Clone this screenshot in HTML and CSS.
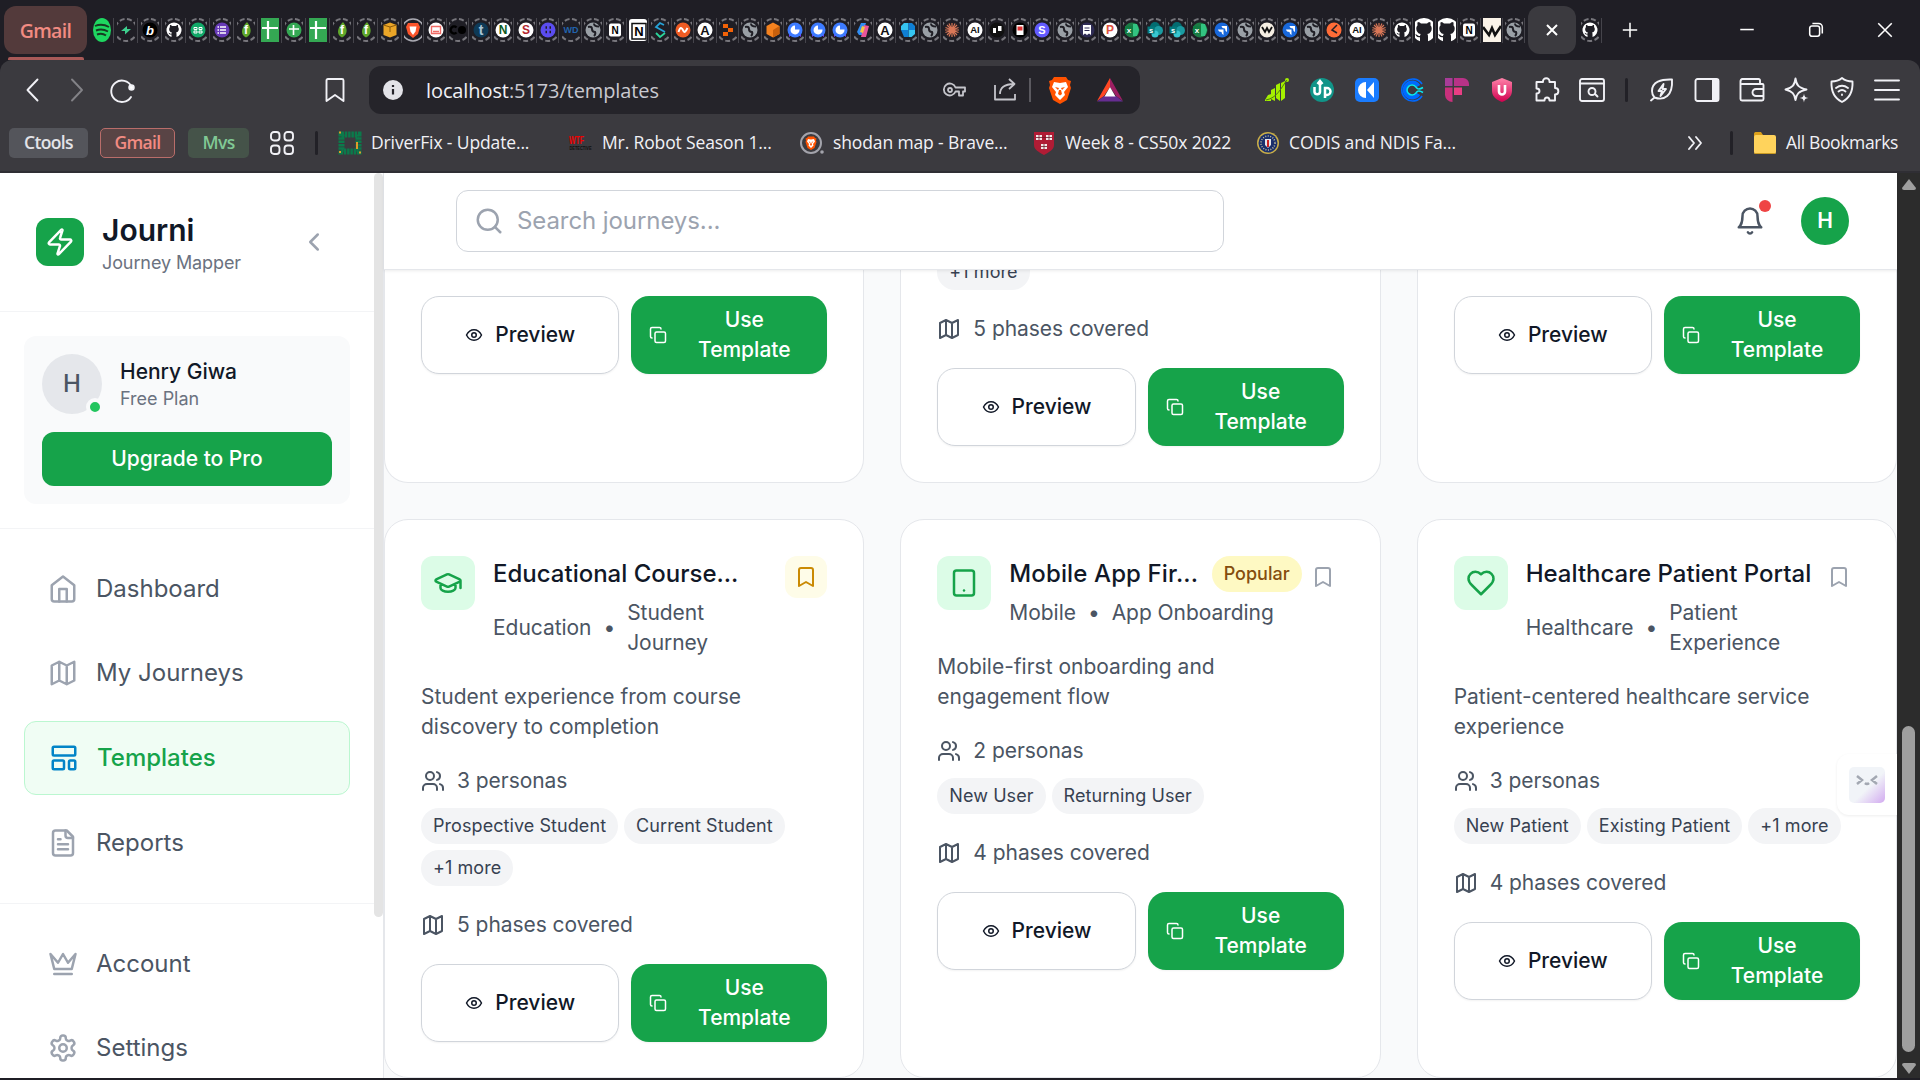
FILE: index.html
```html
<!DOCTYPE html>
<html lang="en">
<head>
<meta charset="utf-8">
<title>Journi - Templates</title>
<link rel="stylesheet" href="styles.css">
</head>
<body>
<svg class="defs" aria-hidden="true">
  <symbol id="zap" viewBox="0 0 24 24"><path d="M4 14a1 1 0 0 1-.78-1.63l9.9-10.2a.5.5 0 0 1 .86.46l-1.92 6.02A1 1 0 0 0 13 10h7a1 1 0 0 1 .78 1.63l-9.9 10.2a.5.5 0 0 1-.86-.46l1.92-6.02A1 1 0 0 0 11 14z"/></symbol>
  <symbol id="chev" viewBox="0 0 24 24"><path d="m15 18-6-6 6-6"/></symbol>
  <symbol id="home" viewBox="0 0 24 24"><path d="m3 9 9-7 9 7v11a2 2 0 0 1-2 2H5a2 2 0 0 1-2-2z"/><path d="M9 22V12h6v10"/></symbol>
  <symbol id="map" viewBox="0 0 24 24"><path d="M3 6 9 3l6 3 6-3v15l-6 3-6-3-6 3zM9 3v15M15 6v15"/></symbol>
  <symbol id="layout" viewBox="0 0 24 24"><rect width="18" height="7" x="3" y="3" rx="1"/><rect width="9" height="7" x="3" y="14" rx="1"/><rect width="5" height="7" x="16" y="14" rx="1"/></symbol>
  <symbol id="file" viewBox="0 0 24 24"><path d="M15 2H6a2 2 0 0 0-2 2v16a2 2 0 0 0 2 2h12a2 2 0 0 0 2-2V7z"/><path d="M14 2v4a2 2 0 0 0 2 2h4M10 9H8M16 13H8M16 17H8"/></symbol>
  <symbol id="crown" viewBox="0 0 24 24"><path d="m2 4 3 12h14l3-12-6 7-4-7-4 7zM5 20h14"/></symbol>
  <symbol id="gear" viewBox="0 0 24 24"><path d="M12.22 2h-.44a2 2 0 0 0-2 2v.18a2 2 0 0 1-1 1.73l-.43.25a2 2 0 0 1-2 0l-.15-.08a2 2 0 0 0-2.73.73l-.22.38a2 2 0 0 0 .73 2.73l.15.1a2 2 0 0 1 1 1.72v.51a2 2 0 0 1-1 1.74l-.15.09a2 2 0 0 0-.73 2.73l.22.38a2 2 0 0 0 2.73.73l.15-.08a2 2 0 0 1 2 0l.43.25a2 2 0 0 1 1 1.73V20a2 2 0 0 0 2 2h.44a2 2 0 0 0 2-2v-.18a2 2 0 0 1 1-1.73l.43-.25a2 2 0 0 1 2 0l.15.08a2 2 0 0 0 2.73-.73l.22-.39a2 2 0 0 0-.73-2.73l-.15-.08a2 2 0 0 1-1-1.74v-.5a2 2 0 0 1 1-1.74l.15-.09a2 2 0 0 0 .73-2.73l-.22-.38a2 2 0 0 0-2.73-.73l-.15.08a2 2 0 0 1-2 0l-.43-.25a2 2 0 0 1-1-1.73V4a2 2 0 0 0-2-2z"/><circle cx="12" cy="12" r="3"/></symbol>
  <symbol id="search" viewBox="0 0 24 24"><circle cx="11" cy="11" r="8"/><path d="m21 21-4.3-4.3"/></symbol>
  <symbol id="bell" viewBox="0 0 24 24"><path d="M6 8a6 6 0 0 1 12 0c0 7 3 9 3 9H3s3-2 3-9M10.3 21a1.94 1.94 0 0 0 3.4 0"/></symbol>
  <symbol id="eye" viewBox="0 0 24 24"><path d="M2 12s3.5-7 10-7 10 7 10 7-3.500 7-10 7S2 12 2 12z"/><circle cx="12" cy="12" r="3"/></symbol>
  <symbol id="copy" viewBox="0 0 24 24"><rect width="14" height="14" x="8" y="8" rx="2"/><path d="M4 16c-1.100 0-2-.9-2-2V4c0-1.100.9-2 2-2h10c1.100 0 2 .9 2 2"/></symbol>
  <symbol id="users" viewBox="0 0 24 24"><path d="M16 21v-2a4 4 0 0 0-4-4H6a4 4 0 0 0-4 4v2M22 21v-2a4 4 0 0 0-3-3.87M16 3.130a4 4 0 0 1 0 7.750"/><circle cx="9" cy="7" r="4"/></symbol>
  <symbol id="mark" viewBox="0 0 24 24"><path d="m19 21-7-4-7 4V5a2 2 0 0 1 2-2h10a2 2 0 0 1 2 2z"/></symbol>
  <symbol id="grad" viewBox="0 0 24 24"><path d="M21.420 10.920a1 1 0 0 0-.02-1.840L12.830 5.180a2 2 0 0 0-1.660 0L2.600 9.080a1 1 0 0 0 0 1.830l8.570 3.910a2 2 0 0 0 1.660 0zM22 10v6M6 12.500V16a6 3 0 0 0 12 0v-3.500"/></symbol>
  <symbol id="tablet" viewBox="0 0 24 24"><rect width="16" height="20" x="4" y="2" rx="2"/><path d="M12 18h.01"/></symbol>
  <symbol id="heart" viewBox="0 0 24 24"><path d="M19 14c1.490-1.460 3-3.210 3-5.500A5.500 5.500 0 0 0 16.500 3c-1.760 0-3 .5-4.500 2-1.500-1.500-2.740-2-4.500-2A5.500 5.500 0 0 0 2 8.500c0 2.300 1.500 4.050 3 5.500l7 7z"/></symbol>
  <symbol id="lion" viewBox="0 0 24 28"><path fill="#ff5200" d="M6 1h12l2 3 3 1-1 4 1 3-4 12-7 4-7-4L1 12l1-3-1-4 3-1z"/><path fill="#fff" d="m6 6 6 1 6-1 2 5-4 5 1 3-5 5-5-5 1-3-4-5z"/><path fill="#ff5200" d="m7 11 4 1-1 2zM17 11l-4 1 1 2zM11 14h2l1 4-2 1.500L10 18z"/></symbol>
</svg>

<header class="browser">
  <div class="tabs">
    <div class="group-tab">Gmail</div>
    <div class="favs" id="favs"></div>
    <svg class="plus" viewBox="0 0 20 20"><path d="M10 2v16M2 10h16"/></svg>
    <div class="win">
      <svg viewBox="0 0 20 20"><path d="M2.500 9.500h15"/></svg>
      <svg viewBox="0 0 20 20"><rect x="3" y="5.500" width="11" height="11.500" rx="2.500"/><path d="M6 2.800h7a4 4 0 0 1 4 4V14"/></svg>
      <svg viewBox="0 0 20 20"><path d="m2.500 2.500 15 15m0-15-15 15"/></svg>
    </div>
  </div>
  <div class="toolbar">
    <div class="nav-left">
      <svg class="w" viewBox="0 0 24 24"><path d="m17.500 1.500-10 10.500 10 10.500"/></svg>
      <svg class="w dim" viewBox="0 0 24 24"><path d="m7 1.500 10 10.500-10 10.500"/></svg>
      <svg class="w" viewBox="0 0 24 24"><path d="M21 19A10.700 10.700 0 1 1 21.500 8.500"/><circle cx="21.500" cy="9.500" r="2.300" fill="#fff"/></svg>
    </div>
    <svg class="w book" viewBox="0 0 24 24"><path d="M3.500 2.500c0-1 .5-1.500 1.500-1.500h14c1 0 1.500.5 1.500 1.500V23l-8.500-6-8.500 6z"/></svg>
    <div class="address">
      <svg class="info" viewBox="0 0 20 20"><circle cx="10" cy="10" r="10" fill="#e3e3e8"/><path d="M10 9v5.500M10 5v2" stroke="#25242a" stroke-width="2.200"/></svg>
      <span class="url">localhost<em>:5173/templates</em></span>
      <svg class="key" viewBox="0 0 24 24"><path d="M13.500 9.500H23v4h-2v4h-4v-4h-3.500a6 6 0 1 1 0-4z"/><circle cx="8" cy="12" r="2"/></svg>
      <svg class="share" viewBox="0 0 24 24"><path d="M2 7v14.500h20V16M7 16c0-6 4-10 14-10M16 1l5.500 5-5.500 5"/></svg>
      <i class="bar"></i>
      <svg class="brave" viewBox="0 0 24 28"><use href="#lion"/></svg>
      <svg class="bat" viewBox="0 0 26 24"><path fill="#ff4724" d="M13 0v9l-6 9-7 5z"/><path fill="#9e1f63" d="M13 0v9l6 9 7 5z"/><path fill="#662d91" d="M0 23.500 7 18h12l7 5.500z"/><path fill="#fff" d="m13 9 5.500 9.500h-11z"/></svg>
    </div>
    <div class="ext">
      <svg viewBox="0 0 24 24"><path fill="#a4f000" d="M0 22l3-5 3-1v7H0zM6 12l4-2v13l-4-2zM11 7l4-2v18l-4-3zM16 5l4-2v17l-4 3z"/><circle cx="22" cy="2" r="2" fill="#a4f000"/><path d="M1 22C12 20 16 10 22 2" fill="none" stroke="#4d7c0f" stroke-width="1"/></svg>
      <svg viewBox="0 0 24 24"><circle cx="12" cy="12" r="12" fill="#119488"/><path d="M4.500 9v5a2.800 2.800 0 0 0 5.500 0V4M7.500 6 10 3l2.500 3M15 20V10h2a3.500 3.500 0 0 1 0 7h-2" fill="none" stroke="#fff" stroke-width="2.500"/></svg>
      <svg viewBox="0 0 24 24"><rect width="24" height="24" rx="5" fill="#1a7cff"/><path fill="#fff" d="M11 4v16a8 8 0 0 1 0-16zM19 4v16l-7-8z"/></svg>
      <svg viewBox="0 0 24 24" fill="none" stroke-width="1.600"><path stroke="#0069ff" d="M22 18a11 11 0 1 1 0-12"/><path stroke="#0069ff" stroke-width="4" d="M18.500 16a7.500 7.500 0 1 1 0-8"/><path stroke="#0ae8f0" d="M23 9.500c-5 3-6 1-7-.5a5 5 0 1 0 0 6c1-1.500 2-3.500 7-.5"/></svg>
      <svg viewBox="0 0 24 24"><path fill="#a83c98" d="M0 0h7.500v8H0z"/><path fill="#b83287" d="M9 0h9a6 6 0 0 1 6 6v2H9z"/><path fill="#c9307c" d="M0 9.500h7.500V24A7.500 7.500 0 0 1 0 17z"/><path fill="#e83e84" d="M9 9.500h8V17H9z"/></svg>
      <svg viewBox="0 0 24 24"><defs><linearGradient id="ug" x2="0" y2="1"><stop stop-color="#ff83aa"/><stop offset="1" stop-color="#d1004f"/></linearGradient></defs><path fill="url(#ug)" d="m12 0 10 4v9c0 6-5 9-10 11C7 22 2 19 2 13V4z"/><path d="M9 7v6.500a3 3 0 0 0 6 0V7" fill="none" stroke="#fff" stroke-width="2.600"/></svg>
      <svg class="w" viewBox="0 0 24 24"><path d="M1.500 4h6.500c-.5-5 7-5 6.500 0h5.500v6c4.500 0 4.500 6.500 0 6.500V22.500h-5.500c0-4-5-4-5 0H1.500v-7c4 0 4-5 0-5z"/></svg>
      <svg class="w" viewBox="0 0 24 24"><rect x="0" y="1" width="24" height="22" rx="2"/><path d="M0 5.500h24"/><circle cx="12" cy="13.500" r="3.500"/><path d="m15 16 2.500 2.500"/></svg>
      <i class="sep"></i>
      <svg class="w" viewBox="0 0 24 24"><path d="M22 1.500C11 1 2 4 2 13c0 3 1 5 2.500 6.500C14 23 23 18 22 1.500zM1 22.500l3.500-3"/><path d="m13.500 6-5 7h3.500l-1.500 5 5.500-7h-3.500z"/></svg>
      <svg class="w" viewBox="0 0 24 24"><rect x=".5" y="1" width="23" height="22" rx="2"/><path fill="#f1f1f6" stroke="none" d="M17 1h7v22h-7z"/></svg>
      <svg class="w" viewBox="0 0 24 24"><path d="M20 6V2.500c0-1-.5-1.500-1.500-1.500H2.500C1 1 .5 2 .5 3.500V21c0 1 .5 1.500 1.500 1.500h20c1 0 1.500-.5 1.500-1.500V7c0-.7-.5-1-1-1H2M23 11h-7a3.500 3.500 0 0 0 0 7h7"/></svg>
      <svg class="w" viewBox="0 0 24 24"><path d="M10.500.5c1 7 3 9 11 11-8 2-10 4-11 10.500C9.500 15.500 7.500 13.500.5 11.500c7-2 9-4 10-11z"/><path fill="#f1f1f6" stroke="none" d="M19 15.500c.5 3 1 4 4.500 4.500-3.500.5-4 1.500-4.500 4.500-.5-3-1-4-4.500-4.500 3.500-.5 4-1.500 4.500-4.500z"/></svg>
      <svg class="w" viewBox="0 0 24 24"><path d="M12 0c3 2.500 6 3.500 10.500 3.500C23 13 20 20 12 24 4 20 1 13 1.500 3.500 6 3.500 9 2.500 12 0z"/><path d="M6 10c4-3 8-3 12 0M8.500 13.500c2.500-2 4.500-2 7 0M12 16.500v.5"/></svg>
      <svg class="w" viewBox="0 0 24 24"><path d="M0 2.500h24M0 12h24M0 21.500h24"/></svg>
    </div>
  </div>
  <div class="bookmarks">
    <span class="chip grey">Ctools</span><span class="chip red">Gmail</span><span class="chip green">Mvs</span>
    <svg class="w grid4" viewBox="0 0 24 24"><rect x="1" y="1" width="8.500" height="8.500" rx="3"/><rect x="14.500" y="1" width="8.500" height="8.500" rx="3"/><rect x="1" y="14.500" width="8.500" height="8.500" rx="3"/><rect x="14.500" y="14.500" width="8.500" height="8.500" rx="3"/></svg>
    <i class="sep"></i>
    <div class="links">
      <span><svg viewBox="0 0 24 24"><path d="M3.500 3.500h17v17h-17z" fill="none" stroke="#0b7a4b" stroke-width="6" stroke-dasharray="2.500 .8"/><path d="M1 1.500h2m18 20h2M19 11v7M1 21h2" stroke="#e09a2b" stroke-width="2"/></svg><b>DriverFix - Update...</b></span>
      <span><svg viewBox="0 0 24 24"><text x="0" y="13" class="wtf" textLength="15" lengthAdjust="spacingAndGlyphs">WTF</text><text x=".5" y="19" class="det" textLength="22" lengthAdjust="spacingAndGlyphs">DETECTIVE</text></svg><b>Mr. Robot Season 1...</b></span>
      <span><svg viewBox="0 0 24 24"><circle cx="11" cy="12" r="10" fill="none" stroke="#a3a3ab" stroke-width="2"/><use href="#lion" x="5" y="5" width="12" height="14"/><circle cx="22" cy="21" r="1.800" fill="#a3a3ab"/></svg><b>shodan map - Brave...</b></span>
      <span><svg viewBox="0 0 24 24"><path fill="#b01c35" d="M2 1h20v13c0 5-5 7-10 10C7 21 2 19 2 14z"/><path fill="#f3e9ea" d="M4 4h6v5H4zM14 4h6v5h-6zM9 13h6v5H9z"/><path stroke="#6e1a28" d="M7 4v5M17 4v5M12 13v5M4 6.500h16M9 15.500h6" stroke-width=".8"/></svg><b>Week 8 - CS50x 2022</b></span>
      <span><svg viewBox="0 0 24 24"><circle cx="12" cy="12" r="11" fill="#c9ae48"/><circle cx="12" cy="12" r="9.500" fill="#1b2f6b"/><circle cx="12" cy="12" r="7" fill="none" stroke="#c9c49a" stroke-width="1.500" stroke-dasharray="1 1.500"/><path fill="#e5e5ea" d="M9 8h6v6l-3 3-3-3z"/><path stroke="#c22" d="M12 9v7" stroke-width="2"/></svg><b>CODIS and NDIS Fa...</b></span>
    </div>
    <svg class="w more" viewBox="0 0 16 16"><path d="m2 2 5 6-5 6M9 2l5 6-5 6"/></svg>
    <i class="sep"></i>
    <span class="all"><svg viewBox="0 0 24 24"><path fill="#dca01a" d="M1 3c0-1 .5-2 1.500-2H8l2 3h6v6H1z"/><rect x="1" y="4" width="22" height="19" rx="2" fill="#ffd35c"/><path d="M1.500 22.500h21" stroke="#c99a24"/></svg><b>All Bookmarks</b></span>
  </div>
</header>

<div class="page">
  <aside class="side">
    <div class="brand">
      <div class="logo"><svg class="i"><use href="#zap"/></svg></div>
      <div><h1>Journi</h1><p>Journey Mapper</p></div>
      <svg class="i fold"><use href="#chev"/></svg>
    </div>
    <div class="acct">
      <div class="panel">
        <div class="who">
          <div class="ava">H<i></i></div>
          <div><strong>Henry Giwa</strong><p>Free Plan</p></div>
        </div>
        <button class="up">Upgrade to Pro</button>
      </div>
    </div>
    <nav>
      <a><svg class="i"><use href="#home"/></svg><span>Dashboard</span></a>
      <a><svg class="i"><use href="#map"/></svg><span>My Journeys</span></a>
      <a class="on"><svg class="i"><use href="#layout"/></svg><span>Templates</span></a>
      <a><svg class="i"><use href="#file"/></svg><span>Reports</span></a>
    </nav>
    <nav>
      <a><svg class="i"><use href="#crown"/></svg><span>Account</span></a>
      <a><svg class="i"><use href="#gear"/></svg><span>Settings</span></a>
    </nav>
    <i class="side-scroll"></i>
  </aside>
  <main>
    <div class="top">
      <div class="search"><svg class="i"><use href="#search"/></svg><span>Search journeys...</span></div>
      <div class="bell"><svg class="i"><use href="#bell"/></svg><i></i></div>
      <div class="me">H</div>
    </div>
    <div class="cards">
      <article class="card cut">
        <div class="acts"><button class="pv"><svg class="i"><use href="#eye"/></svg>Preview</button><button class="use"><svg class="i"><use href="#copy"/></svg><span>Use Template</span></button></div>
      </article>
      <article class="card cut tall">
        <div class="chips"><span>+1 more</span></div>
        <div class="row"><svg class="i"><use href="#map"/></svg><span>5 phases covered</span></div>
        <div class="acts"><button class="pv"><svg class="i"><use href="#eye"/></svg>Preview</button><button class="use"><svg class="i"><use href="#copy"/></svg><span>Use Template</span></button></div>
      </article>
      <article class="card cut">
        <div class="acts"><button class="pv"><svg class="i"><use href="#eye"/></svg>Preview</button><button class="use"><svg class="i"><use href="#copy"/></svg><span>Use Template</span></button></div>
      </article>
      <article class="card">
        <div class="head">
          <div class="ico"><svg class="i"><use href="#grad"/></svg></div>
          <div class="ttl"><h3>Educational Course...</h3><div class="meta"><span>Education</span><span>•</span><span>Student<br>Journey</span></div></div>
          <div class="bm saved"><svg class="i"><use href="#mark"/></svg></div>
        </div>
        <p class="desc">Student experience from course discovery to completion</p>
        <div class="row"><svg class="i"><use href="#users"/></svg><span>3 personas</span></div>
        <div class="chips"><span>Prospective Student</span><span>Current Student</span><span>+1 more</span></div>
        <div class="row"><svg class="i"><use href="#map"/></svg><span>5 phases covered</span></div>
        <div class="acts"><button class="pv"><svg class="i"><use href="#eye"/></svg>Preview</button><button class="use"><svg class="i"><use href="#copy"/></svg><span>Use Template</span></button></div>
      </article>
      <article class="card">
        <div class="head">
          <div class="ico"><svg class="i"><use href="#tablet"/></svg></div>
          <div class="ttl"><h3 class="loose">Mobile App Fir...</h3><div class="meta"><span>Mobile</span><span>•</span><span>App Onboarding</span></div></div>
          <span class="pop">Popular</span>
          <div class="bm"><svg class="i"><use href="#mark"/></svg></div>
        </div>
        <p class="desc">Mobile-first onboarding and<br>engagement flow</p>
        <div class="row"><svg class="i"><use href="#users"/></svg><span>2 personas</span></div>
        <div class="chips"><span>New User</span><span>Returning User</span></div>
        <div class="row"><svg class="i"><use href="#map"/></svg><span>4 phases covered</span></div>
        <div class="acts"><button class="pv"><svg class="i"><use href="#eye"/></svg>Preview</button><button class="use"><svg class="i"><use href="#copy"/></svg><span>Use Template</span></button></div>
      </article>
      <article class="card">
        <div class="head">
          <div class="ico"><svg class="i"><use href="#heart"/></svg></div>
          <div class="ttl"><h3>Healthcare Patient Portal</h3><div class="meta"><span>Healthcare</span><span>•</span><span>Patient<br>Experience</span></div></div>
          <div class="bm"><svg class="i"><use href="#mark"/></svg></div>
        </div>
        <p class="desc">Patient-centered healthcare service experience</p>
        <div class="row"><svg class="i"><use href="#users"/></svg><span>3 personas</span></div>
        <div class="chips"><span>New Patient</span><span>Existing Patient</span><span>+1 more</span></div>
        <div class="row"><svg class="i"><use href="#map"/></svg><span>4 phases covered</span></div>
        <div class="acts"><button class="pv"><svg class="i"><use href="#eye"/></svg>Preview</button><button class="use"><svg class="i"><use href="#copy"/></svg><span>Use Template</span></button></div>
      </article>
    </div>
    <div class="face"><svg viewBox="0 0 36 36"><path d="m8 9 5 4-5 4M28 9l-5 4 5 4M16 16q2 2 4 0"/></svg></div>
  </main>
  <div class="vscroll">
    <svg viewBox="0 0 14 11"><path d="M7 0 14 9q0 2-2 2H2Q0 11 0 9z"/></svg>
    <i></i>
    <svg viewBox="0 0 14 11"><path d="M7 11 14 2q0-2-2-2H2Q0 0 0 2z"/></svg>
  </div>
</div>
<script src="tabs.js"></script>
</body>
</html>
```

FILE: styles.css
```css
* { box-sizing: border-box; margin: 0; }
body { width: 1920px; height: 1080px; overflow: hidden; background: #1f1e25; font-family: Inter, sans-serif; color: #4b5563; display: flex; flex-direction: column; }
svg { flex: none; display: block; }
.defs { position: absolute; width: 0; height: 0; }
.i { fill: none; stroke: currentColor; stroke-width: 2; stroke-linecap: round; stroke-linejoin: round; width: 30px; height: 30px; }
button { font: inherit; border: 0; }
h1, h3, b, strong { font-weight: inherit; }

/* browser chrome */
.browser { height: 173px; flex: none; font-family: "Open Sans", "Noto Sans", sans-serif; color: #f1f1f6; }
.tabs { height: 60px; display: flex; align-items: flex-start; padding: 6px 26px 0 4px; }
.group-tab { width: 83px; height: 48px; flex: none; position: relative; background: #533a3b; border-radius: 12px; line-height: 49px; text-align: center; font-size: 19.5px; letter-spacing: -.7px; font-weight: 600; color: #f28b82; }
.group-tab::after { content: ""; position: absolute; left: 4px; right: 3px; top: 51px; height: 3px; border-radius: 2px 2px 0 0; background: #a85a58; }
.favs { display: flex; align-items: center; height: 48px; margin-left: 3px; }
.fav { width: 22.480px; display: flex; justify-content: center; position: relative; height: 24px; }
.fav.wide { width: 24px; }
.fav::after { content: ""; position: absolute; right: 0; top: 0; width: 1px; height: 25px; background: #45444b; }
.fav text { font-family: "Liberation Sans", sans-serif; font-weight: 700; text-anchor: middle; }
.active { width: 48px; height: 48px; border-radius: 12px; background: #3b3a3f; display: flex; align-items: center; justify-content: center; margin: 0 2px 0 3px; }
.active svg { width: 12px; stroke: #fff; stroke-width: 2; }
.plus, .win svg { width: 18px; height: 20px; fill: none; stroke: #fff; stroke-width: 1.700; }
.plus { margin: 14px 0 0 19px; }
.win { display: flex; height: 48px; align-items: center; gap: 51px; margin-left: auto; }
.toolbar { height: 60px; background: #3b3a3f; border-radius: 12px 12px 0 0; display: flex; align-items: center; padding: 0 21px 0 20px; }
.w { width: 24px; height: 24px; fill: none; stroke: #f1f1f6; stroke-width: 1.900; stroke-linecap: round; stroke-linejoin: round; overflow: visible; }
.dim { opacity: .4; }
.nav-left { display: flex; gap: 21px; }
.book { margin-left: 189px; }
.address { margin-left: 22px; width: 771px; height: 48px; background: #25242a; border-radius: 12px; display: flex; align-items: center; padding: 0 17px 0 14px; }
.info { width: 20px; height: 20px; }
.url { margin-left: 23px; font-size: 20px; letter-spacing: -.1px; width: 517px; white-space: nowrap; }
.url em { font-style: normal; color: #c9c9d0; }
.key, .share { width: 24px; height: 24px; fill: none; stroke: #c5c5cb; stroke-width: 1.800; stroke-linejoin: round; }
.share { margin-left: 27px; }
.bar { width: 2px; height: 24px; background: #5b5a60; margin: 0 17px 0 12px; }
.brave { width: 24px; height: 28px; }
.bat { width: 26px; height: 24px; margin-left: 25px; }
.ext { display: flex; gap: 21px; margin-left: auto; align-items: center; }
.ext svg { width: 24px; height: 24px; }
.sep { width: 3px; height: 24px; border-radius: 2px; background: #222127; flex: none; }
.ext .sep { margin: 0 1px 0 0; }
.bookmarks { height: 53px; background: #3b3a3f; border-bottom: 2px solid #2f2e34; display: flex; align-items: center; padding: 0 22px 6px 9px; font-size: 17.500px; }
.chip { height: 30px; border-radius: 5px; display: flex; justify-content: center; align-items: center; flex: none; font-size: 17.500px; line-height: 26px; padding-bottom: 2px; font-weight: 600; letter-spacing: -.650px; }
.grey { width: 79px; background: #54555b; color: #e3e3e8; }
.red { width: 75px; margin-left: 12px; border: 1.500px solid #b96d6a; background: #594445; color: #f28b82; }
.green { width: 61px; margin-left: 13px; background: #455349; color: #81c995; }
.grid4 { margin: 0 21px; }
.links { display: grid; grid-template-columns: 231px 231px 232px 224px 200px; margin-left: 20px; }
.links span, .all { display: flex; align-items: center; gap: 9px; white-space: nowrap; }
.links svg, .all svg { width: 24px; height: 24px; }
b { letter-spacing: -.130px; padding-bottom: 2px; }
.all b { letter-spacing: -.350px; }
.wtf, .det { font: 900 10px "Liberation Sans", sans-serif; fill: #f00000; }
.det { font-size: 5.500px; fill: #111; }
.more { width: 16px; height: 16px; margin-left: auto; margin-right: 27px; }
.all { margin-left: 20px; }

/* app */
.page { height: 905px; display: flex; background: #f9fafb; overflow: hidden; }
.side { width: 384px; flex: none; background: #fff; border-right: 1px solid #e5e7eb; position: relative; }
.brand { height: 139px; padding: 2px 60px 0 36px; display: flex; align-items: center; gap: 18px; border-bottom: 1px solid #f3f4f6; }
.logo { width: 48px; height: 48px; border-radius: 12px; background: #16a34a; color: #fff; display: grid; place-items: center; margin-bottom: 2px; }
h1 { font-size: 30px; line-height: 36px; font-weight: 600; color: #111827; }
.brand p, .who p { font-size: 18px; line-height: 24px; color: #6b7280; }
.brand h1 + p { margin-top: 3px; letter-spacing: -.1px; }
.fold { margin: 0 -6px 2px auto; color: #9ca3af; }
.acct { padding: 24px 33px 24px 24px; border-bottom: 1px solid #f3f4f6; height: 217px; }
.panel { background: #f9fafb; border-radius: 12px; padding: 18px; height: 168px; }
.who { display: flex; gap: 18px; align-items: center; }
.ava { width: 60px; height: 60px; border-radius: 50%; background: #e5e7eb; display: grid; place-items: center; padding-bottom: 2px; font-size: 24px; font-weight: 500; position: relative; }
.ava i { position: absolute; right: -2px; bottom: -1.500px; width: 18px; height: 18px; border-radius: 50%; background: #22c55e; border: 4px solid #f9fafb; }
strong { display: block; font-size: 21px; line-height: 30px; font-weight: 500; color: #111827; }
.up { width: 100%; height: 54px; margin-top: 18px; padding-bottom: 2px; border-radius: 12px; background: #16a34a; color: #fff; font-size: 21px; font-weight: 500; }
nav { padding: 24px 33px 24px 24px; display: flex; flex-direction: column; gap: 12px; border-bottom: 1px solid #f3f4f6; }
nav a { height: 72px; padding-left: 24px; display: flex; align-items: center; gap: 18px; font-size: 24px; }
nav span, .search span { padding-bottom: 2px; }
nav a .i { color: #9ca3af; }
nav a.on { height: 74px; border: 1px solid #bbf7d0; background: #f0fdf4; border-radius: 12px; color: #16a34a; font-weight: 500; }
nav a.on .i { color: #0284c7; }
.side-scroll { position: absolute; right: 0; top: 0; width: 9px; height: 744px; border-radius: 5px; background: #e4e4e4; }
main { width: 1513px; position: relative; display: flex; flex-direction: column; }
.top { height: 97px; flex: none; background: #fff; border-bottom: 1px solid #e5e7eb; box-shadow: 0 1px 3px rgba(0,0,0,.08); position: relative; display: flex; align-items: center; padding: 0 48px 0 72px; }
.search { width: 768px; height: 62px; border: 1px solid #d1d5db; border-radius: 12px; display: flex; align-items: center; gap: 12px; padding-left: 17px; font-size: 24px; letter-spacing: -.080px; color: #9ca3af; }
.search span { margin-left: 1px; }
.bell { margin-left: auto; position: relative; }
.bell i { position: absolute; right: -6px; top: -6px; width: 12px; height: 12px; border-radius: 50%; background: #ef4444; }
.me { width: 48px; height: 48px; margin-left: 36px; border-radius: 50%; background: #16a34a; color: #fff; display: grid; place-items: center; padding-bottom: 2px; font-size: 21px; font-weight: 600; }
.cards { display: grid; grid-template-columns: repeat(3, 1fr); grid-template-rows: 213px 559px; gap: 36px; flex: 1; }
.card { background: #fff; border: 1px solid #e5e7eb; border-radius: 24px; padding: 36px 36px 0; overflow: hidden; display: flex; flex-direction: column; }
.cut { border-top: 0; border-radius: 0 0 24px 24px; padding-top: 26px; }
.tall { padding-top: 0; }
.tall .chips { margin-top: -16px; }
.head { display: flex; align-items: flex-start; margin-bottom: 24px; }
.ico { width: 54px; height: 54px; border-radius: 12px; background: #dcfce7; color: #16a34a; display: grid; place-items: center; margin-right: 18px; }
.ttl { flex: 1; min-width: 0; white-space: nowrap; }
h3 { font-size: 24px; line-height: 36px; font-weight: 500; color: #111827; }
.loose { letter-spacing: .120px; }
.meta { display: flex; align-items: center; gap: 12px; margin-top: 6px; font-size: 21px; line-height: 30px; letter-spacing: -.050px; }
.pop { height: 36px; border-radius: 18px; padding: 0 12px; background: #fef9c3; color: #854d0e; font-size: 18px; line-height: 36px; font-weight: 500; }
.bm { width: 42px; height: 42px; border-radius: 12px; display: grid; place-items: center; color: #9ca3af; }
.bm .i, .row .i { width: 24px; height: 24px; }
.saved { background: #fefce8; color: #ca8a04; }
.desc { font-size: 21px; line-height: 30px; margin-bottom: 24px; }
.row { display: flex; align-items: center; gap: 12px; height: 30px; font-size: 21px; letter-spacing: -.050px; }
.row span { padding-bottom: 1px; line-height: 29px; }
.chips { display: flex; flex-wrap: wrap; gap: 6px; margin: 12px 0 24px; }
.chips span { height: 36px; border-radius: 18px; padding: 0 12px; background: #f3f4f6; color: #374151; font-size: 18px; letter-spacing: .070px; line-height: 36px; white-space: nowrap; }
.acts { display: flex; gap: 12px; }
.row + .acts { margin-top: 24px; }
.acts button { height: 78px; border-radius: 18px; display: flex; align-items: center; gap: 12px; font-size: 21px; line-height: 30px; font-weight: 500; padding: 0 18px; box-shadow: 0 1px 2px rgba(0,0,0,.05); }
.acts .i { width: 18px; height: 18px; }
.pv { flex: 1; justify-content: center; background: #fff; border: 1px solid #d1d5db !important; color: #111827; }
.use { width: 196px; background: #16a34a; color: #fff; }
.use span { flex: 1; text-align: center; }
.face { position: absolute; right: 0; top: 581px; width: 60px; height: 61px; background: #fff; border-radius: 12px 0 0 12px; box-shadow: 0 1px 3px rgba(0,0,0,.07); padding: 13px 12px; }
.face svg { width: 36px; height: 36px; border-radius: 5px; background: linear-gradient(135deg, #f1f4f8 55%, #d2aaf0); fill: none; stroke: #a3a8b2; stroke-width: 2.500; }
.vscroll { width: 23px; background: #2c2c2c; display: flex; flex-direction: column; align-items: center; padding: 6px 0 4px; }
.vscroll svg { width: 14px; height: 11px; fill: #9f9f9f; }
.vscroll i { width: 13px; height: 326px; border-radius: 7px; background: #9f9f9f; margin: auto 0 11px; }
```

FILE: tabs.js
```js
// Favicon strip: every tab is drawn from a small 18x24 icon, keyed by name
const ring = '<circle cx="9" cy="12" r="11" fill="none" stroke="#77767c" stroke-width="2" stroke-dasharray="5 2.500"/>';
const disc = c => `<circle cx="9" cy="12" r="7.500" fill="${c}"/>`;
const txt = (t, c, s = 11) => `<text x="9" y="${12 + s * .36}" font-size="${s}" fill="${c}">${t}</text>`;
const path = (d, c, w) => `<path d="${d}" ${w ? `fill="none" stroke="${c}" stroke-width="${w}"` : `fill="${c}"`}/>`;
const cat = 'M9 4.500a7.500 7.500 0 0 0-2.500 14.600v-2.600c-2 .3-2.500-1-3-1.800 1.200 0 1.500 1.300 3 1 0-.6.300-1 .500-1.200-3-.5-3.500-4-2-5.500-.3-1 0-1.800.2-2 1 0 1.600.7 2 1h3.600c.4-.3 1-1 2-1 .2.200.5 1 .2 2 1.500 1.500 1 5-2 5.500.5.500.5 1 .5 2v2.600A7.500 7.500 0 0 0 9 4.500z';
const burst = 'M9 5v14M2 12h14M4 7l10 10M14 7 4 17M6 5.500l6 13M12 5.500l-6 13M2.500 9.500l13 5M15.500 9.500l-13 5';
const K = {
  spotify: '<ellipse cx="9" cy="12" rx="9" ry="12" fill="#1ed760"/>' + path('M2 8q7-3 14 1M3 12.500q6-2.500 12 1M4 16.500q5-2 9 1', '#173b22', 1.9),
  bolt: ring + path('M10 8v3h4l-6 5.500V13H4z', '#3ecf8e'),
  b: ring + disc('#000') + txt('<tspan font-style="italic">b</tspan>', '#fff', 13),
  gh: ring + path(cat, '#fff'),
  ghbig: `<g transform="translate(-5.400 -7.200) scale(1.600)">${path(cat, '#fff')}</g>`,
  mesh: ring + disc('#11a868') + path('M5 9.500h3v2H5zM10 9.500h3v2h-3zM5 13h3v2H5zM10 13h3v2h-3z', '#fff', 1),
  list: ring + disc('#673ab7') + path('M7 9h6M7 12h6M7 15h6M4.500 9H6M4.500 12H6M4.500 15H6', '#fff', 1.6),
  leaf: ring + path('M10 4c5 6 5 13-1 15.500C3 17 4 10 10 4z', '#5fa82a') + txt('f', '#fff', 12),
  sheetbig: '<path fill="#34a853" d="M0 0h18v24H0z"/><path stroke="#fff" stroke-width="2.200" d="M7 3v18M1 10h16"/>',
  sheet: ring + disc('#34a853') + path('M8.500 7v10M4 11h10', '#fff', 1.6),
  box: ring + path('M2.500 7 9 4.500 15.500 7v10L9 19.500 2.500 17z', '#eba628') + path('M2.500 7 9 9l6.500-2M9 9v5', '#8c5a0a', 1),
  brave: '<circle cx="9" cy="12" r="11" fill="none" stroke="#aaaab2" stroke-width="1.600"/>' + path('M4 5h10l2 4-2 7-5 4-5-4-2-7z', '#fb542b') + path('M5.500 8.500h7l-1 5L9 17l-2.500-3.500z', '#fff'),
  card: ring + disc('#fff') + path('M4.500 8.500h9v7h-9zM6 13.500h6', '#ef6b66', 1.4),
  co: ring + path('M7.500 9.500a3.500 3.500 0 1 0 0 5', '#000', 2.4) + '<circle cx="13" cy="12" r="4" fill="#000"/>',
  t: ring + disc('#0e3a57') + txt('t', '#a9c4d6', 14),
  n: ring + disc('#fff') + txt('N', '#0b5a1e', 12),
  s5: ring + disc('#fff') + txt('S', '#b3262e', 12),
  reel: ring + disc('#5b4df0') + path('M6.500 9.500h1.500M10.500 9.500H12M6.500 14h1.500M10.500 14H12', '#1f1e25', 2.500),
  wd: ring + txt('WD', '#2264ad', 9),
  globe: ring + disc('#9aa0a6') + path('M4 9q4-1 4 2t3 3q1 2-1 4M10 5.500q0 3 5 3', '#1f1e25', 2),
  notion: ring + '<rect x="3" y="5.500" width="12" height="13" rx="2" fill="#fff"/>' + txt('N', '#000', 10),
  notionbig: '<rect x="0" y="1" width="18" height="22" rx="3" fill="#fff"/><path fill="none" stroke="#111" stroke-width="1.500" d="M3 5.500h14V21H3z"/>' + '<text x="10" y="18" font-size="13" fill="#000">N</text>',
  sw: ring + path('M13 7 9 5 5 9l9 5', '#27a3d8', 1.800) + path('m5 15 4 4 5-4', '#2bd49a', 1.800),
  wave: ring + disc('#ee5b23') + path('M4.500 14c2-7 4-3 5-1s2 1 4-3', '#fff', 1.900),
  A: ring + disc('#fff') + txt('A', '#111', 13),
  rep: ring + path('M4 6h5v4H4zM9 10h5v4H9zM4 14h5v4H4z', '#f26207'),
  cube: ring + path('M2.500 8 9 4.500 15.500 8v8L9 19.500 2.500 16z', '#f5821f') + path('M9 12v7.500l6.500-3.500V8z', '#c9600c'),
  pie: ring + path('M3 13h12v6l-2-1.500-2 1.500-2-1.500L7 19l-2-1.500L3 19z', '#7b2ff2') + disc('#3d7bff') + path('M9 7.500v4h4.500A4.500 4.500 0 1 1 9 7.500z', '#fff'),
  pilot: ring + path('M3 14 7 5h5l-4 12H5z', '#2f8df4') + path('m10 7 5 1-3 11H7z', '#e8559a') + path('m8 8 3 1-2 6-3-1z', '#f6c244'),
  blue4: ring + path('M5 5h4.500v7H2V8zM9.500 12H16v4l-3.500 3h-3z', '#36c5f0') + path('M9.500 5H13l3 3v4H9.500zM2 12h7.500v7H5z', '#0f7fd4'),
  burst: ring + path(burst, '#d97757', 1.200),
  AI: ring + disc('#fff') + txt('AI', '#111', 9.500),
  dark: ring + disc('#111') + path('M5 10h3v5H5zM10 8h3.500v5H10z', '#fff'),
  doc: ring + disc('#000') + path('M5.500 7h7v10h-7z', '#fff') + path('M6.500 8.500h5v4h-5z', '#d33'),
  S: ring + disc('#635bff') + txt('S', '#fff', 11),
  print: ring + disc('#2f2c55') + path('M5 7h8v10l-2-1.500L9 17l-2-1.500L5 17z', '#fff') + path('M6.500 10h5M6.500 12.500h5', '#2f2c55', 1),
  P: ring + disc('#fff') + txt('P', '#e0533f', 12),
  xl: ring + disc('#1d7a45') + '<path fill="#33c481" d="M10 6h4l2 6-2 6h-4z"/><path fill="#107c41" d="M2 8h8v8H2z"/><text x="6" y="15" font-size="8" fill="#fff">x</text>',
  sp: ring + '<circle cx="9" cy="9" r="5" fill="#036c70"/><circle cx="12.500" cy="12.500" r="4.500" fill="#1a9ba1"/><circle cx="9" cy="16" r="3.500" fill="#37c6d0"/><path fill="#03787c" d="M1.500 8.500h7v7h-7z"/><text x="5" y="14.500" font-size="7.500" fill="#fff">s</text>',
  jira: ring + disc('#1868db') + path('M8.500 8H14v6q-2-1-2-3.500-3 0-3.500-2.500zM5 11.500h5.500v5.500q-2-1-2-3-3 0-3.500-2.500z', '#fff'),
  W: ring + disc('#f6efe3') + path('M4 9l3 5 2-4 2 4 3-5', '#111', 1.800),
  Wbig: '<path fill="#faf3e8" d="M0 0h18v24H0z"/>' + path('M0 9l6 8 3-7 3 7 6-9', '#111', 2.600),
  post: ring + disc('#ff6c37') + path('m12 7-5 5 5 3', '#1f1e25', 1.500)
};
const first = 'spotify bolt b gh mesh list leaf sheetbig sheet sheetbig leaf leaf box'.split(' ');
const rest = ('brave card co t n s5 reel wd globe notion notionbig sw wave A rep globe cube pie pie pie pilot A blue4 globe burst AI dark doc S globe print P xl sp sp xl jira globe W jira globe post AI burst gh ghbig ghbig notion Wbig globe').split(' ');
const fav = (k, wide) => `<div class="fav${wide ? ' wide' : ''}"><svg width="18" height="24" viewBox="0 0 18 24">${K[k]}</svg></div>`;
document.getElementById('favs').innerHTML =
  first.map(k => fav(k, true)).join('') + rest.map(k => fav(k)).join('') +
  '<div class="active"><svg viewBox="0 0 12 12"><path d="m1 1 10 10M11 1 1 11"/></svg></div>' + fav('gh', true);
```
